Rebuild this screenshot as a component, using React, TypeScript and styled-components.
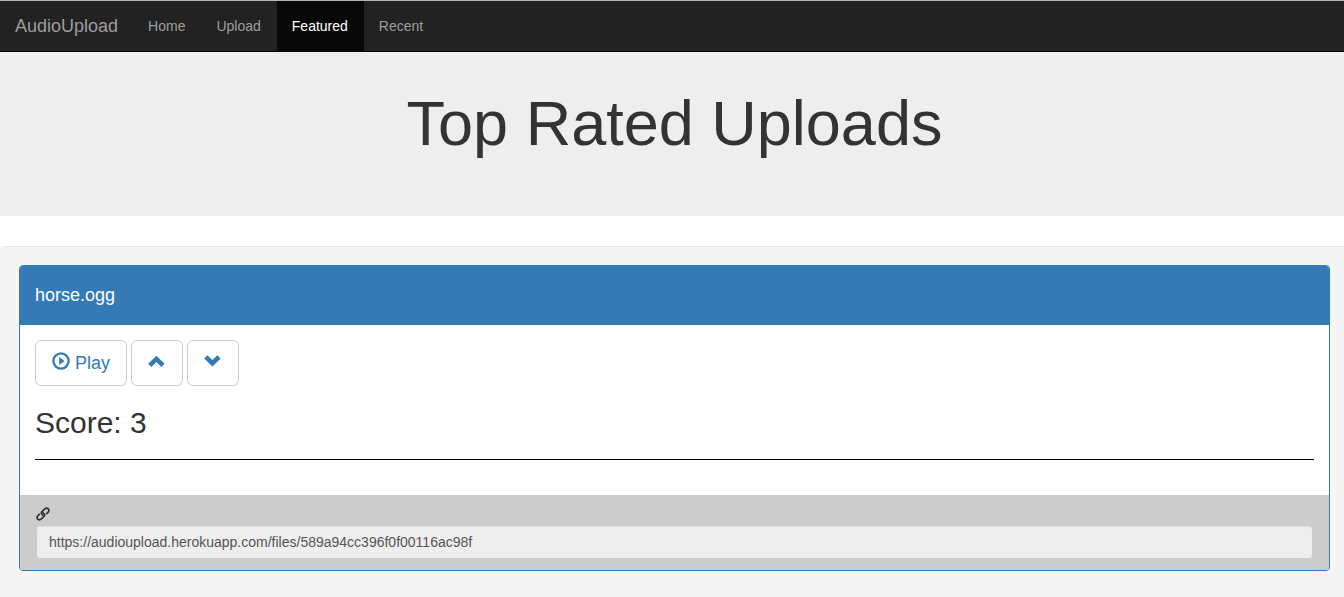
import React, { useState } from "react";
import styled, { createGlobalStyle } from "styled-components";

const GlobalStyle = createGlobalStyle`
  *, *::before, *::after { box-sizing: border-box; }
  html { background: #f5f5f5; }
  body {
    margin: 0;
    font-family: "Helvetica Neue", Helvetica, Arial, "Liberation Sans", sans-serif;
    font-size: 14px;
    line-height: 20px;
    color: #333;
  }
`;

const Page = styled.div`
  background: #fff;
  overflow: hidden;
`;

const Navbar = styled.nav`
  display: flex;
  min-height: 52px;
  background: #222;
  border-top: 1px solid #b0b4b3;
  border-bottom: 1px solid #080808;
`;

const Brand = styled.a`
  padding: 15px;
  font-size: 18px;
  color: #9d9d9d;
  text-decoration: none;
`;

const NavList = styled.ul`
  display: flex;
  margin: 0;
  padding: 0;
  list-style: none;
`;

const NavLink = styled.a<{ $active?: boolean }>`
  display: block;
  padding: 15px 16px 15px 15px;
  color: ${(p) => (p.$active ? "#fff" : "#9d9d9d")};
  background: ${(p) => (p.$active ? "#080808" : "transparent")};
  text-decoration: none;
`;

const Jumbotron = styled.header`
  padding: 37px 0 58px 5px;
  background: #eee;
  text-align: center;
`;

const Title = styled.h1`
  margin: 0;
  font-size: 63px;
  font-weight: 500;
  line-height: 69px;
`;

const Well = styled.main`
  margin-top: 30px;
  padding: 18px 14px 26px 19px;
  background: #f5f5f5;
  border-top: 1px solid #e8e8e8;
  border-radius: 4px 0 0 0;
`;

const Panel = styled.article`
  background: #fff;
  border: 1px solid #337ab7;
  border-radius: 4px;
  overflow: hidden;
`;

const PanelHeading = styled.div`
  padding: 19px 15px 20px;
  background: #337ab7;
  color: #fff;
`;

const FileName = styled.h2`
  margin: 0;
  font-size: 18px;
  font-weight: 500;
  line-height: 20px;
`;

const PanelBody = styled.div`
  padding: 15px 15px 35px;
`;

const ButtonRow = styled.div`
  display: flex;
  gap: 4px;
`;

const Button = styled.button`
  display: flex;
  align-items: center;
  gap: 5px;
  height: 46px;
  padding: 0 16px;
  font: inherit;
  font-size: 18px;
  color: #337ab7;
  background: #fff;
  border: 1px solid #ccc;
  border-radius: 6px;
  cursor: pointer;
`;

const Icon = styled.svg`
  display: block;
  fill: currentColor;
  margin-bottom: 4px;
`;

const Score = styled.h3`
  margin: 20px 0;
  font-size: 30px;
  font-weight: 500;
  line-height: 33px;
`;

const Divider = styled.hr`
  margin: 0;
  border: 0;
  border-top: 1px solid #000;
`;

const PanelFooter = styled.div`
  padding: 11px 16px;
  background: #ccc;
`;

const LinkLabel = styled.label`
  display: block;
  padding-top: 1px;
  height: 19px;
`;

const LinkInput = styled.input`
  display: block;
  width: 100%;
  height: 34px;
  padding: 6px 12px;
  font: inherit;
  color: #555;
  background: #eee;
  border: 1px solid #ccc;
  border-radius: 4px;
  box-shadow: inset 0 1px 1px rgba(0, 0, 0, 0.075);
`;

const PlayIcon = () => (
  <Icon width="18" height="18" viewBox="0 0 18 18" aria-hidden="true">
    <circle cx="9" cy="9" r="7.6" fill="none" stroke="currentColor" strokeWidth="2.3" />
    <path d="M7.1 5.1 12.6 9 7.1 12.9z" />
  </Icon>
);

const ChevronUp = () => (
  <Icon width="18" height="18" viewBox="0 0 18 18" aria-hidden="true">
    <path d="M8.4 3.8 16.6 11.8 13.4 15 8.4 10.1 3.4 15 .2 11.8z" />
  </Icon>
);

const ChevronDown = () => (
  <Icon width="18" height="18" viewBox="0 0 18 18" aria-hidden="true">
    <path d="M8.4 14.4 .2 6.4 3.4 3.2 8.4 8.1 13.4 3.2 16.6 6.4z" />
  </Icon>
);

const ChainIcon = () => (
  <Icon width="14" height="14" viewBox="0 0 14 14" aria-hidden="true">
    <g fill="none" stroke="currentColor" strokeWidth="1.7">
      <path d="M7.8 8.4C5.6 8 4.6 6.2 6 4.7L8.6 2.1C10 .8 11.6 1 12.4 2 13.2 3.2 13 4.4 12 5.4L10.3 7.1" />
      <path d="M6.2 5.6C8.4 6 9.4 7.8 8 9.3L5.4 11.9C4 13.2 2.4 13 1.6 12 .8 10.8 1 9.6 2 8.6L3.7 6.9" />
    </g>
  </Icon>
);

const links = ["Home", "Upload", "Featured", "Recent"];

export default function App() {
  const [score, setScore] = useState(3);
  return (
    <Page>
      <GlobalStyle />
      <Navbar>
        <Brand href="#">AudioUpload</Brand>
        <NavList>
          {links.map((name) => (
            <li key={name}>
              <NavLink href={`#${name.toLowerCase()}`} $active={name === "Featured"}>
                {name}
              </NavLink>
            </li>
          ))}
        </NavList>
      </Navbar>
      <Jumbotron>
        <Title>Top Rated Uploads</Title>
      </Jumbotron>
      <Well>
        <Panel>
          <PanelHeading>
            <FileName>horse.ogg</FileName>
          </PanelHeading>
          <PanelBody>
            <ButtonRow>
              <Button type="button">
                <PlayIcon />
                Play
              </Button>
              <Button type="button" aria-label="Vote up" onClick={() => setScore(score + 1)}>
                <ChevronUp />
              </Button>
              <Button type="button" aria-label="Vote down" onClick={() => setScore(score - 1)}>
                <ChevronDown />
              </Button>
            </ButtonRow>
            <Score>Score: {score}</Score>
            <Divider />
          </PanelBody>
          <PanelFooter>
            <LinkLabel htmlFor="file-link" aria-label="File link">
              <ChainIcon />
            </LinkLabel>
            <LinkInput
              id="file-link"
              type="text"
              readOnly
              value="https://audioupload.herokuapp.com/files/589a94cc396f0f00116ac98f"
            />
          </PanelFooter>
        </Panel>
      </Well>
    </Page>
  );
}
